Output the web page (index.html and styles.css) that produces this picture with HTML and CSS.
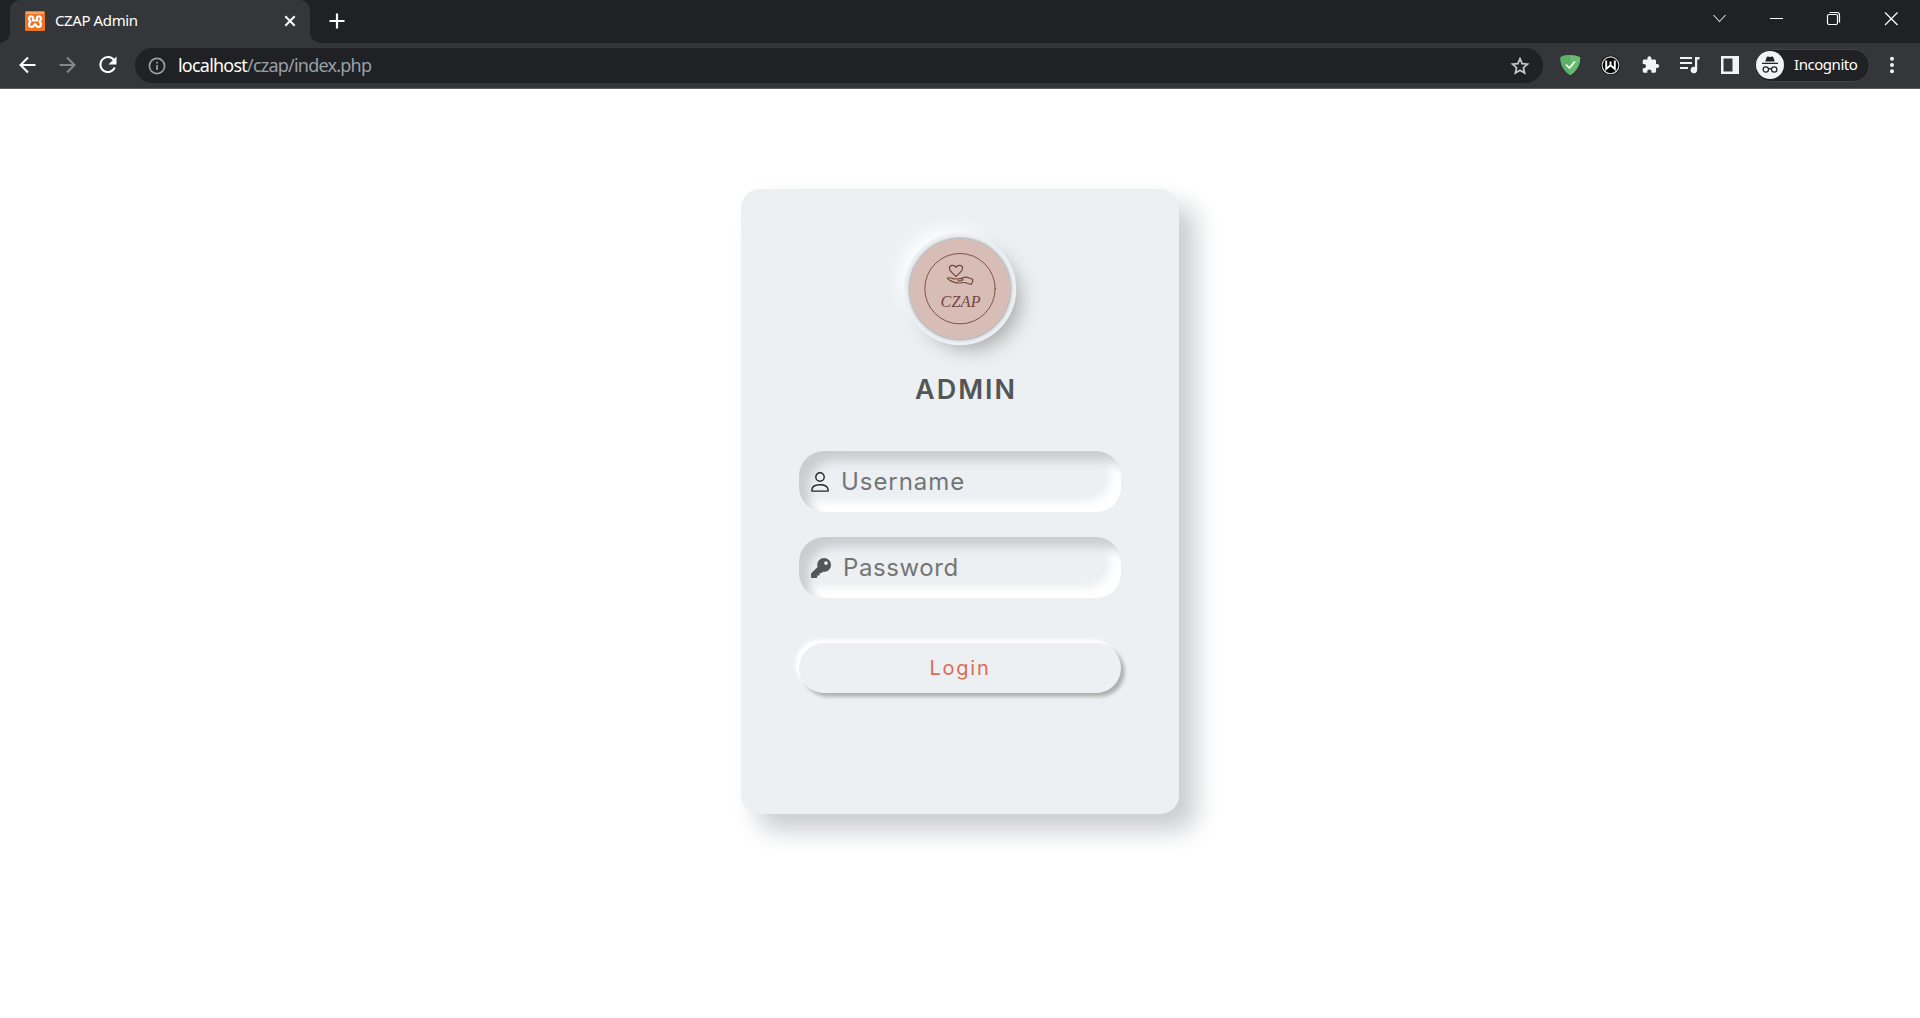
FILE: index.html
```html
<!DOCTYPE html>
<html lang="en">
<head>
<meta charset="utf-8">
<title>CZAP Admin</title>
<link rel="stylesheet" href="styles.css">
</head>
<body>
<header class="browser">
  <div class="tabstrip">
    <div class="tab">
      <svg class="favicon" width="20" height="20" viewBox="0 0 20 20"><rect width="20" height="20" rx="1.500" fill="#ee7422"/><path d="M1 1h18v2H1z" fill="#f7a367"/><path d="M8 9.200V6.600C8 5 4.200 4.700 4 7.500c0 1.500.7 2.200 1.500 3C4.700 11.300 4 12 4 13.500c.2 2.800 3.800 3 5 1l1-1.300 1 1.300c1.200 2 4.800 1.800 5-1 0-1.500-.7-2.200-1.500-3 .8-.8 1.500-1.500 1.500-3 -.2-2.800-4-2.500-4-.9v2.600M8 9.500h4" fill="none" stroke="#fff" stroke-width="2.200" stroke-linecap="round" stroke-linejoin="round"/></svg>
      <span class="tab-title">CZAP Admin</span>
      <svg class="tab-close" width="20" height="20" viewBox="0 0 20 20"><path d="m5.300 5.300 9.400 9.400m0-9.400-9.400 9.400" stroke="#fff" stroke-width="2"/></svg>
    </div>
    <svg class="new-tab" width="20" height="20" viewBox="0 0 20 20"><path d="M10 2.500v15M2.500 10h15" stroke="#fff" stroke-width="2.200"/></svg>
    <div class="window-controls">
      <svg width="57" height="37" viewBox="0 0 57 37" fill="none" stroke="#ddd" stroke-width="1.100"><path d="m22.500 15 6 6.500 6-6.500"/></svg>
      <svg width="57" height="37" viewBox="0 0 57 37" fill="none" stroke="#fff"><path d="M22 18.500h13"/></svg>
      <svg width="57" height="37" viewBox="0 0 57 37" fill="none" stroke="#fff" stroke-width="1.200"><rect x="22.500" y="14.500" width="10" height="10" rx="1.500"/><path d="M24.500 12.500h7.500q2.500 0 2.500 2.500v7.500"/></svg>
      <svg width="58" height="37" viewBox="0 0 58 37" fill="none" stroke="#fff" stroke-width="1.200"><path d="m23 12.500 12.500 12.500m0-12.500L23 25"/></svg>
    </div>
  </div>
  <div class="toolbar">
    <svg class="tool" viewBox="0 0 40 40" fill="none" stroke="#fff" stroke-width="2"><path d="M27.500 20h-15m7.500-7.500-7.500 7.500 7.500 7.500"/></svg>
    <svg class="tool" viewBox="0 0 40 40" fill="none" stroke="#86878a" stroke-width="2"><path d="M11.500 20h15M19 12.500l7.500 7.500-7.500 7.500"/></svg>
    <svg class="tool" viewBox="0 0 40 40"><path d="M26 15.200A7.500 7.500 0 1 0 26.800 22.500" fill="none" stroke="#fff" stroke-width="2"/><path d="M28.500 11.500v8h-8z" fill="#fff"/></svg>
    <div class="omnibox">
      <svg width="18" height="18" viewBox="0 0 18 18" fill="none" stroke="#9aa0a6" stroke-width="1.700"><circle cx="9" cy="9" r="7.600"/><path d="M9 8v5M9 4.800v1.700"/></svg>
      <span class="url"><b>localhost</b>/czap/index.php</span>
      <svg class="star" width="20" height="20" viewBox="0 0 20 20" fill="none" stroke="#c7c8ca" stroke-width="1.700"><path d="m10 2.600 2.100 5 5.400.5-4.100 3.600 1.200 5.300-4.600-2.800-4.600 2.800 1.200-5.300-4.100-3.600 5.400-.5z"/></svg>
    </div>
    <svg class="tool" viewBox="0 0 40 40"><path d="M20.300 10c3.600 0 7.100.7 9.900 2.200 0 3.200.4 11.100-9.900 18-10.200-6.900-9.800-14.800-9.800-18 2.700-1.500 6.200-2.200 9.800-2.200z" fill="#68bc71"/><path d="M20.300 10v20.200c-10.200-6.900-9.800-14.800-9.800-18 2.700-1.500 6.200-2.200 9.800-2.200z" fill="#5caf68"/><path d="m16 19.500 3.300 3.500 5.700-6.500" fill="none" stroke="#fff" stroke-width="1.700"/></svg>
    <svg class="tool" viewBox="0 0 40 40"><circle cx="20.500" cy="20.300" r="9.800" fill="#090909"/><circle cx="20.500" cy="20.300" r="8.400" fill="none" stroke="#ddd" stroke-width="1.100"/><path d="M16.200 15.500V24l4.300-3.700 4.300 3.700v-8.500M20.500 16.500v4" fill="none" stroke="#fff" stroke-width="1.900"/></svg>
    <svg class="tool" viewBox="0 0 24 24"><path transform="translate(6.700 6.300) scale(.47)" d="M20.500 11H19V7c0-1.100-.9-2-2-2h-4V3.500C13 2.120 11.880 1 10.500 1S8 2.120 8 3.500V5H4c-1.100 0-1.990.9-1.990 2v3.800H3.500c1.490 0 2.700 1.210 2.700 2.700s-1.210 2.700-2.700 2.700H2V20c0 1.100.9 2 2 2h3.800v-1.500c0-1.490 1.210-2.700 2.700-2.700 1.490 0 2.700 1.210 2.700 2.700V22H17c1.100 0 2-.9 2-2v-4h1.500c1.380 0 2.500-1.120 2.500-2.500S21.880 11 20.500 11z" fill="#f1f3f4"/></svg>
    <svg class="tool" viewBox="0 0 40 40"><path d="M10 13h12M10 18h12M10 23h8" stroke="#f1f3f4" stroke-width="2"/><path d="M25 12h4.500v2.600h-2.300V25a3.300 3.300 0 1 1-2.200-3.100z" fill="#f1f3f4"/></svg>
    <svg class="tool" viewBox="0 0 40 40"><path fill="#f1f3f4" fill-rule="evenodd" d="M11 11h18v18H11zm2.500 2.500v13h9v-13z"/></svg>
    <div class="profile">
      <svg width="28" height="28" viewBox="0 0 28 28"><circle cx="14" cy="14" r="14" fill="#f1f3f4"/><path d="M9.200 10.500 10.800 6q.3-.8 1.200-.5l2 .5 2-.5q.9-.3 1.200.5l1.600 4.500zM6 11.800h16v1.300H6z" fill="#202124"/><g fill="none" stroke="#202124" stroke-width="1.200"><circle cx="9.800" cy="18.500" r="2.700"/><circle cx="18.200" cy="18.500" r="2.700"/><path d="M12.500 18.200q1.500-1 3 0"/></g></svg>
      <span>Incognito</span>
    </div>
    <svg class="tool menu" viewBox="0 0 40 40" fill="#f1f3f4"><circle cx="20" cy="13.800" r="2"/><circle cx="20" cy="20" r="2"/><circle cx="20" cy="26.200" r="2"/></svg>
  </div>
</header>
<main class="page">
  <section class="card">
    <div class="logo">
      <svg width="100" height="100" viewBox="0 0 100 100">
        <circle cx="50" cy="50" r="50" fill="#d8bdb6"/>
        <g fill="none" stroke="#74453b" stroke-width="1.200" stroke-linejoin="round" stroke-linecap="round">
          <circle cx="50" cy="49.700" r="35.200" stroke-width=".9"/>
          <path d="M46 37.500c-2.500-2.500-6.600-5-6.600-8.200 0-3.400 4.600-4.200 6.600-.9 2-3.300 6.600-2.500 6.600.9 0 3.200-4.100 5.700-6.600 8.200z"/>
          <path d="M37.300 39c3.500-1 5.200.8 8 1 3 .2 4.600-.8 6.800-.2 1.500.4.800 1.700-.5 1.900l-4 .3M37.300 39c-.3 1.400 5.700 4 8.200 4.700 4.500 1.200 8.200-1.300 11.200.3l4.300 1.500q2.400-2.500 1.700-5.200c-4-1.300-5.500-2.500-8.200-2l-4.400 1.500"/>
        </g>
        <text class="logo-text" x="50.500" y="67.500" text-anchor="middle" textLength="40">CZAP</text>
      </svg>
    </div>
    <h1 class="name">ADMIN</h1>
    <form class="login">
      <label class="field">
        <svg width="20" height="20" viewBox="0 0 20 20" fill="none" stroke="#212529" stroke-width="1.400"><circle cx="10" cy="5" r="4.200"/><path d="M1.900 19.100v-1q0-5.300 8.100-5.300t8.100 5.300v1z" stroke-linejoin="round"/></svg>
        <span class="placeholder">Username</span>
      </label>
      <label class="field">
        <svg class="key" width="20" height="20" viewBox="0 0 512 512"><path fill="#555" d="M512 176c0 97.200-78.800 176-176 176-11.220 0-22.190-1.062-32.830-3.070l-24.010 27.010A23.999 23.999 0 0 1 261.220 384H224v40c0 13.250-10.750 24-24 24h-40v40c0 13.250-10.750 24-24 24H24c-13.250 0-24-10.750-24-24v-78.060c0-6.370 2.530-12.470 7.030-16.970l161.800-161.800C163.110 213.800 160 195.270 160 176 160 78.800 238.800 0 336 0s176 78.530 176 176zM336 128c0 26.510 21.490 48 48 48s48-21.490 48-48-21.490-48-48-48-48 21.490-48 48z"/></svg>
        <span class="placeholder password">Password</span>
      </label>
      <button class="login-button" type="button">Login</button>
    </form>
  </section>
</main>
</body>
</html>
```
FILE: styles.css
```css
* { box-sizing: border-box; }
body {
  margin: 0;
  height: 1018px;
  overflow: hidden;
  background: #fff;
  font-family: Inter, "Open Sans", sans-serif;
}
svg { flex: none; display: block; }

.browser {
  height: 89px;
  background: #35363a;
  border-bottom: 1px solid #5e5f62;
  color: #fff;
  font-family: "Noto Sans", "Open Sans", sans-serif;
}
.tabstrip {
  display: flex;
  height: 43px;
  padding-left: 10px;
  background: #202124;
}
.tab {
  position: relative;
  display: flex;
  align-items: center;
  width: 300px;
  height: 43px;
  padding: 0 10px 1px 15px;
  border-radius: 10px 10px 0 0;
  background: #35363a;
}
.tab::before,
.tab::after {
  content: "";
  position: absolute;
  bottom: 0;
  width: 10px;
  height: 10px;
}
.tab::before { right: 100%; background: radial-gradient(circle at 0 0, #202124 9.5px, #35363a 10px); }
.tab::after { left: 100%; background: radial-gradient(circle at 100% 0, #202124 9.5px, #35363a 10px); }
.tab-title { margin-left: 10px; padding-bottom: 2px; font-size: 15px; letter-spacing: -0.4px; }
.tab-close { margin-left: auto; }
.new-tab { margin: 11px 0 0 17px; }
.window-controls { display: flex; margin-left: auto; }

.toolbar {
  display: flex;
  align-items: center;
  height: 45px;
  padding: 0 8px 1px;
}
.tool { width: 40px; height: 40px; }
.omnibox {
  display: flex;
  align-items: center;
  width: 1408px;
  height: 35px;
  margin: 1px 7px 0;
  padding: 0 13px;
  border-radius: 18px;
  background: #202124;
}
.url { margin-left: 12px; padding-bottom: 1px; color: #9aa0a6; font-size: 18px; letter-spacing: -0.78px; }
.url b { color: #fff; font-weight: 400; }
.star { margin-left: auto; }
.profile {
  display: flex;
  align-items: center;
  width: 116px;
  height: 33px;
  margin-left: 4px;
  padding-left: 1px;
  border: 1px solid #424347;
  border-radius: 17px;
  background: #202124;
  font-size: 15px;
  letter-spacing: -0.45px;
}
.profile span { margin-left: 10px; padding-bottom: 2px; }
.menu { margin-left: 2px; }

.page { padding-top: 100px; }
.card {
  width: 438px;
  height: 625px;
  margin: 0 auto;
  padding: 50px 58px 0;
  border-radius: 18.75px;
  background: #ecf0f3;
  box-shadow: 16.25px 16.25px 25px #cbced1, -16.25px -16.25px 25px #fff;
}
.logo {
  width: 100px;
  height: 100px;
  margin: 0 auto;
  border-radius: 50%;
  box-shadow: 0 0 3.75px #5f5f5f, 0 0 0 6.25px #ecf0f3, 10px 10px 18.75px #a7aaa7, -10px -10px 18.75px #fff;
}
.logo-text {
  fill: #74453b;
  font: italic 16px "Liberation Serif", serif;
}
.name {
  margin: 33px 0 0;
  padding-left: 12px;
  color: #555;
  font-size: 27px;
  font-weight: 600;
  line-height: 36px;
  letter-spacing: 2px;
  text-align: center;
}
.login { margin-top: 43px; }
.field {
  display: flex;
  align-items: center;
  height: 61px;
  margin-bottom: 25px;
  padding-left: 11px;
  border-radius: 25px;
  box-shadow: inset 10px 10px 10px #cbced1, inset -10px -10px 10px #fff;
}
.key { margin-left: 1px; }
.placeholder { margin-left: 11px; color: #757575; font-size: 24px; letter-spacing: 0.95px; }
.password { margin-left: 12px; letter-spacing: 0.6px; }
.login-button {
  display: block;
  width: 100%;
  height: 50px;
  margin-top: 45px;
  padding: 0;
  border: 0;
  border-radius: 25px;
  background: #ecf0f3;
  box-shadow: 3.75px 3.75px 3.75px #b1b1b1, -3.75px -3.75px 3.75px #fff;
  color: #dd6b55;
  font: 20px Inter, sans-serif;
  letter-spacing: 1.8px;
}
```
